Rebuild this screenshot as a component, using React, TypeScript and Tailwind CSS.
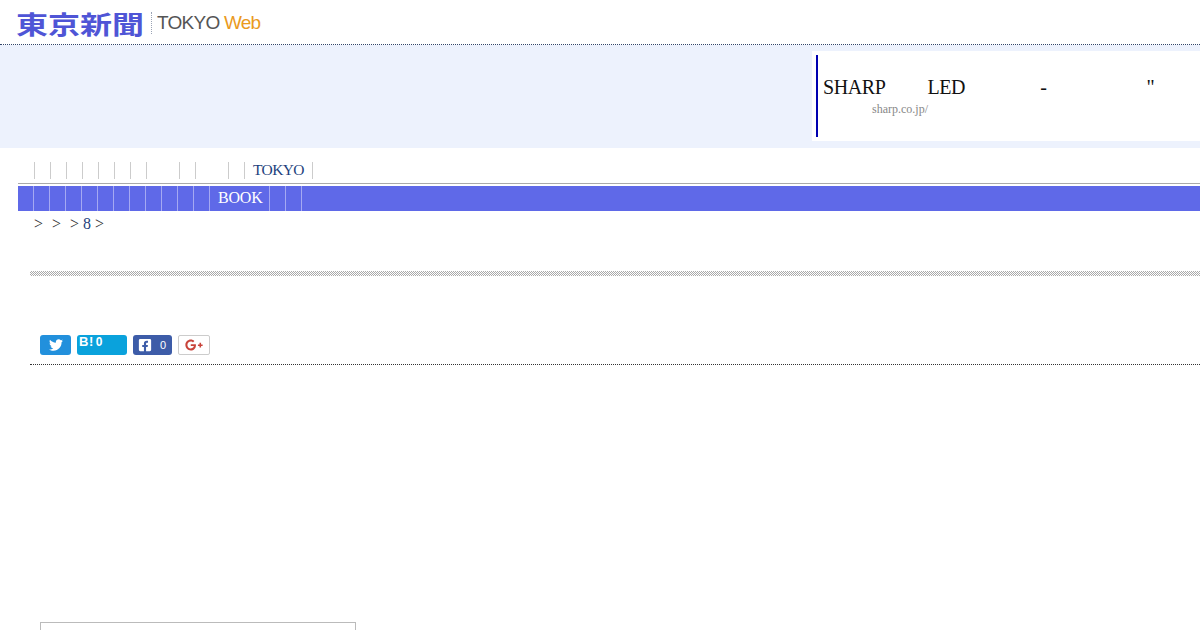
import { FaTwitter, FaFacebookSquare, FaGooglePlusG } from 'react-icons/fa'

const serif = 'font-["Liberation_Serif",serif]'

const topLinks = [16, 16, 16, 16, 16, 16, 16, 33, 16, 33, 16]
const navLinks = [16, 16, 16, 16, 16, 16, 16, 16, 16, 16, 16]

function Header() {
  return (
    <header className="h-[45px] border-b border-dotted border-[#33466b] pl-4 flex items-start pt-[8px]">
      <span className="w-[127px] h-[30px]">
        <span className='inline-block origin-left scale-x-[1.28] text-[25px] leading-[30px] font-bold whitespace-nowrap text-[#4f55d6] font-["Noto_Sans_CJK_JP",sans-serif]'>東京新聞</span>
      </span>
      <span className="w-px h-[22px] mt-[4px] ml-[8px] border-l border-dotted border-[#9aa3b5]" />
      <span className='ml-[5px] text-[19px] leading-[30px] tracking-[-0.75px] text-[#555] font-["Liberation_Sans",sans-serif]'>
        TOKYO <span className="text-[#ea9a1e]">Web</span>
      </span>
    </header>
  )
}

function AdBand() {
  return (
    <div className="h-[103px] bg-[#edf2fd] flex justify-end pt-[6px]">
      <div className={`w-[388px] h-[90px] bg-white pl-[4px] ${serif}`}>
        <div className="mt-[4px] h-[82px] border-l-[2px] border-[#0000b0] pl-[5px] pt-[19px]">
          <p className="text-[20px] leading-[26px] tracking-[-0.4px] text-[#111] whitespace-nowrap">
            SHARP<span className="ml-[42px]">LED</span>
            <span className="ml-[75px]">-</span>
            <span className="ml-[100px]">"</span>
          </p>
          <p className="pl-[49px] text-[12px] leading-[18px] text-[#888]">sharp.co.jp/</p>
        </div>
      </div>
    </div>
  )
}

function Nav() {
  return (
    <nav className={`pl-[18px] mt-[14px] ${serif}`}>
      <div className="h-[22px] border-b border-[#aaa] flex pl-[16px] items-start">
        {topLinks.map((w, i) => (
          <span key={i} className="h-[17px] border-l border-[#ccc]" style={{ width: w }} />
        ))}
        <span className="h-[17px] border-x border-[#ccc] px-[8px] text-[15.5px] leading-[15px] tracking-[-0.6px] text-[#1d3f7c]">TOKYO</span>
      </div>
      <div className="mt-[2px] h-[25px] bg-[#5f69e8] flex pl-[15px] text-white">
        {navLinks.map((w, i) => (
          <span key={i} className="border-l border-[#a5a9f2]" style={{ width: w }} />
        ))}
        <span className="w-[60px] border-l border-[#a5a9f2] pl-[8px] text-[16px] leading-[24px] tracking-[-0.2px]">BOOK</span>
        <span className="w-[16px] border-l border-[#a5a9f2]" />
        <span className="w-[16px] border-l border-[#a5a9f2]" />
        <span className="border-l border-[#a5a9f2]" />
      </div>
      <p className="mt-[4px] pl-[16px] text-[16px] leading-[18px] text-[#333] whitespace-nowrap">
        &gt;<span className="ml-[9px]">&gt;</span>
        <span className="ml-[9px]">&gt;</span>
        <span className="ml-[4px] text-[#1d3f7c]">8</span>
        <span className="ml-[4px]">&gt;</span>
      </p>
    </nav>
  )
}

function ShareBar() {
  return (
    <div className="ml-[30px] mt-[38px] h-[5px] bg-[repeating-conic-gradient(#aaa_0_25%,#fff_0_50%)] bg-[length:2px_2px]" />
  )
}

function Buttons() {
  return (
    <div className="ml-[30px] mt-[59px] h-[30px] border-b border-dotted border-[#333] pl-[10px] flex gap-[6px] items-start">
      <a className="w-[31px] h-[20px] rounded-[3px] bg-[#2290dc] flex items-center justify-center text-white text-[14px]">
        <FaTwitter />
      </a>
      <a className='w-[50px] h-[20px] rounded-[3px] bg-[#0aa2dc] pl-[2px] text-white text-[13px] leading-[14px] font-bold tracking-[0.5px] font-["Liberation_Sans",sans-serif]'>
        B!<span className="ml-[2px] text-[12px]">0</span>
      </a>
      <a className="w-[39px] h-[20px] rounded-[3px] bg-[#3d5ca8] flex items-center pl-[5px] text-white text-[14px]">
        <FaFacebookSquare />
        <span className='ml-[8px] text-[11px] font-["Liberation_Sans",sans-serif]'>0</span>
      </a>
      <a className="w-[32px] h-[20px] border border-[#ccc] rounded-[2px] flex items-center justify-center text-[#c8433a] text-[18px]">
        <FaGooglePlusG />
      </a>
    </div>
  )
}

export default function App() {
  return (
    <div className="w-[1200px] h-[630px] overflow-hidden bg-white">
      <Header />
      <AdBand />
      <Nav />
      <ShareBar />
      <Buttons />
      <div className="ml-[40px] mt-[257px] w-[316px] h-[20px] border border-[#bbb] bg-white" />
    </div>
  )
}
